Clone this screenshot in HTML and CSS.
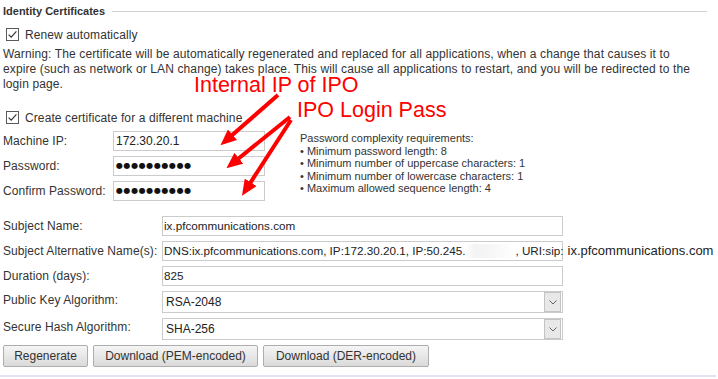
FILE: index.html
```html
<!DOCTYPE html>
<html lang="en">
<head>
<meta charset="utf-8">
<title>Identity Certificates</title>
<link rel="stylesheet" href="styles.css">
</head>
<body>
<div class="panel">
  <div class="legend">
    <span class="legend-title">Identity Certificates</span>
    <span class="legend-rule"></span>
  </div>

  <label class="check check-renew">
    <svg class="box" viewBox="0 0 13 13" width="13" height="13"><rect x="0.5" y="0.5" width="12" height="12" fill="#fff" stroke="#5a5a5a"/><polyline points="2.6,6.6 5.2,9.2 10.4,3.4" fill="none" stroke="#333" stroke-width="1.2"/></svg>
    <span>Renew automatically</span>
  </label>

  <p class="warn">Warning: The certificate will be automatically regenerated and replaced for all applications, when a change that causes it to expire (such as network or LAN change) takes place. This will cause all applications to restart, and you will be redirected to the login page.</p>

  <label class="check check-machine">
    <svg class="box" viewBox="0 0 13 13" width="13" height="13"><rect x="0.5" y="0.5" width="12" height="12" fill="#fff" stroke="#5a5a5a"/><polyline points="2.6,6.6 5.2,9.2 10.4,3.4" fill="none" stroke="#333" stroke-width="1.2"/></svg>
    <span>Create certificate for a different machine</span>
  </label>

  <div class="machine">
    <div class="machine-grid">
      <span class="label">Machine IP:</span>
      <div class="field">172.30.20.1</div>
      <span class="label">Password:</span>
      <div class="field field-dots">●●●●●●●●●●</div>
      <span class="label">Confirm Password:</span>
      <div class="field field-dots">●●●●●●●●●●</div>
    </div>
    <ul class="reqs">
      <li>Password complexity requirements:</li>
      <li>• Minimum password length: 8</li>
      <li>• Minimum number of uppercase characters: 1</li>
      <li>• Minimum number of lowercase characters: 1</li>
      <li>• Maximum allowed sequence length: 4</li>
    </ul>
  </div>

  <div class="fields">
    <span class="label">Subject Name:</span>
    <div class="field field-wide">ix.pfcommunications.com</div>
    <span class="label">Subject Alternative Name(s):</span>
    <div class="field field-wide field-overflow">DNS:ix.pfcommunications.com, IP:172.30.20.1, IP:50.245.<span class="redact"></span>, URI:sip:<span class="outside">ix.pfcommunications.com</span></div>
    <span class="label">Duration (days):</span>
    <div class="field field-wide">825</div>
    <span class="label label-select">Public Key Algorithm:</span>
    <div class="select"><span>RSA-2048</span><span class="select-btn"><svg viewBox="0 0 8 5" width="8" height="5"><polyline points="0.5,0.5 4,4 7.5,0.5" fill="none" stroke="#666" stroke-width="1"/></svg></span></div>
    <span class="label label-select">Secure Hash Algorithm:</span>
    <div class="select"><span>SHA-256</span><span class="select-btn"><svg viewBox="0 0 8 5" width="8" height="5"><polyline points="0.5,0.5 4,4 7.5,0.5" fill="none" stroke="#666" stroke-width="1"/></svg></span></div>
  </div>

  <div class="buttons">
    <button class="btn btn-regen">Regenerate</button>
    <button class="btn btn-pem">Download (PEM-encoded)</button>
    <button class="btn btn-der">Download (DER-encoded)</button>
  </div>

  <div class="bottom-rule"></div>

  <span class="note note-ip">Internal IP of IPO</span>
  <span class="note note-pass">IPO Login Pass</span>
  <svg class="arrows" width="718" height="379" viewBox="0 0 718 379">
    <defs>
      <marker id="head" markerUnits="userSpaceOnUse" markerWidth="16" markerHeight="14" refX="6" refY="7" orient="auto">
        <path d="M0,0 L16,7 L0,14 z" fill="#f00"/>
      </marker>
    </defs>
    <line x1="278" y1="95" x2="228" y2="138.7" stroke="#f00" stroke-width="4" marker-end="url(#head)"/>
    <line x1="290" y1="117" x2="234.2" y2="162" stroke="#f00" stroke-width="4" marker-end="url(#head)"/>
    <line x1="291" y1="120" x2="247.4" y2="187.3" stroke="#f00" stroke-width="4" marker-end="url(#head)"/>
  </svg>
</div>
</body>
</html>
```

FILE: styles.css
```css
* { box-sizing: border-box; }
html, body { margin: 0; padding: 0; background: #fff; }
body {
  font-family: "Liberation Sans", Arial, sans-serif;
  font-size: 12px;
  color: #333;
  width: 718px;
  height: 379px;
  overflow: hidden;
}
.panel {
  position: relative;
  width: 718px;
  height: 379px;
  padding-left: 3px;
}
.legend {
  display: flex;
  align-items: center;
  height: 22px;
  width: 704px;
  gap: 7px;
}
.legend-title { font-weight: bold; font-size: 11px; color: #333; }
.legend-rule { flex: 1; height: 1px; background: #cfcfcf; }

.check {
  display: flex;
  align-items: center;
  gap: 6px;
  height: 13px;
  margin-left: 3px;
  letter-spacing: 0.1px;
}
.check-renew { margin-top: 6px; }
.check-machine { margin-top: 19px; }
.box { display: block; flex: none; }

.warn {
  margin: 6px 0 0;
  line-height: 15px;
  max-width: 690px;
  letter-spacing: 0.12px;
}

.machine {
  display: flex;
  align-items: flex-start;
  margin-top: 7px;
}
.machine-grid {
  display: grid;
  grid-template-columns: 110px 152px;
  grid-auto-rows: 20px;
  row-gap: 5px;
  align-items: center;
}
.reqs {
  list-style: none;
  margin: 0 0 0 35px;
  padding: 1px 0 0;
  font-size: 11px;
  line-height: 12.5px;
  color: #333;
}

.label { white-space: nowrap; letter-spacing: 0.08px; }

.field {
  height: 20px;
  border: 1px solid #cbcbcb;
  background: #fff;
  padding: 0 2px;
  line-height: 18px;
  white-space: nowrap;
  color: #222;
  overflow: hidden;
}
.field-wide { font-size: 11.7px; padding-left: 1px; }
.field-dots {
  font-family: "DejaVu Sans", sans-serif;
  font-size: 8px;
  letter-spacing: 0.6px;
  color: #111;
}
.field-overflow { overflow: visible; }
.redact {
  display: inline-block;
  width: 50px;
  height: 14px;
  vertical-align: -3px;
  background: linear-gradient(90deg, #fff 0%, #f3f3f3 20%, #f6f6f6 50%, #fff 100%);
}
.outside { margin-left: 4px; font-size: 13px; }

.fields {
  display: grid;
  grid-template-columns: 159px 401px;
  grid-template-rows: 20px 20px 20px 22px 22px;
  row-gap: 5px;
  margin-top: 15px;
  align-items: center;
}
.label-select { align-self: start; padding-top: 2px; }

.select {
  height: 22px;
  border: 1px solid #cbcbcb;
  background: #fff;
  display: flex;
  align-items: center;
  justify-content: space-between;
  padding: 0 1px 0 3px;
  color: #222;
}
.select-btn {
  width: 17px;
  height: 20px;
  background: #e8e8e8;
  border: 1px solid #c4c4c4;
  display: flex;
  align-items: center;
  justify-content: center;
}
.select-btn svg { display: block; }

.buttons {
  display: flex;
  gap: 5px;
  margin-top: 5px;
}
.btn {
  height: 22px;
  padding: 0 10px;
  font-family: "Liberation Sans", Arial, sans-serif;
  font-size: 12px;
  color: #333;
  border: 1px solid #adadad;
  border-radius: 2px;
  background: linear-gradient(#f5f5f5, #dadada);
}
.btn-regen { width: 85px; }
.btn-pem { width: 165px; }
.btn-der { width: 166px; }

.bottom-rule {
  height: 2px;
  margin: 8px 0 0 -3px;
  width: 716px;
  background: #e2e2f4;
}

.note {
  position: absolute;
  font-family: "Liberation Sans", Arial, sans-serif;
  font-size: 21.5px;
  line-height: 1;
  color: #f00;
  white-space: nowrap;
}
.note-ip { left: 194px; top: 74.5px; }
.note-pass { left: 297px; top: 100px; }

.arrows {
  position: absolute;
  left: 0;
  top: 0;
  pointer-events: none;
}
```
